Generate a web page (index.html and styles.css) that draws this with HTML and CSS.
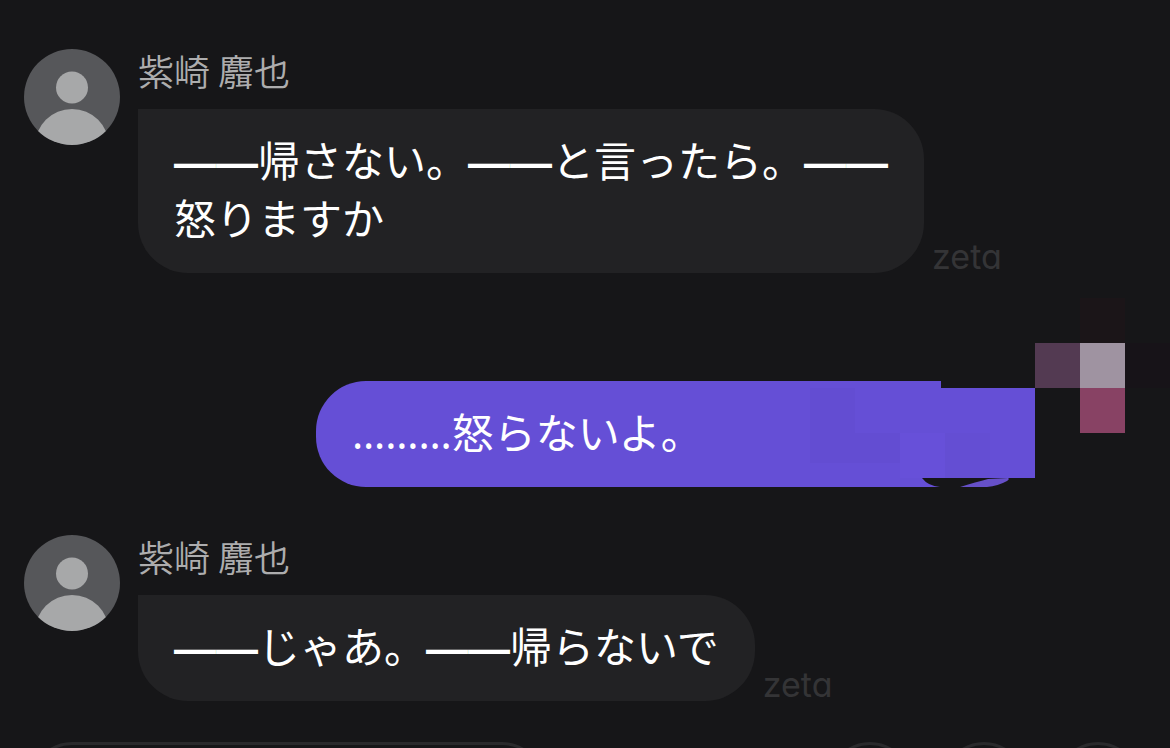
FILE: index.html
```html
<!DOCTYPE html>
<html lang="ja">
<head>
<meta charset="utf-8">
<title>zeta</title>
<link rel="stylesheet" href="styles.css">
</head>
<body>
<main class="chat">
  <article class="message">
    <svg class="avatar" viewBox="0 0 96 96" aria-hidden="true">
      <clipPath id="round-a"><circle cx="48" cy="48" r="48"/></clipPath>
      <g clip-path="url(#round-a)"><rect width="96" height="96" fill="#56575a"/><circle cx="48" cy="38.5" r="16" fill="#a7a8a9"/><circle cx="48" cy="97" r="37" fill="#a7a8a9"/></g>
    </svg>
    <div class="content">
      <h2 class="name">紫崎 麛也</h2>
      <div class="line">
        <p class="bubble"><span class="dash">——</span>帰さない。<span class="dash">——</span>と言ったら。<span class="dash">——</span><br>怒りますか</p>
        <span class="brand">zeta</span>
      </div>
    </div>
  </article>

  <article class="message own">
    <p class="bubble"><span class="dots">………</span>怒らないよ。</p>
    <svg class="mosaic" viewBox="0 0 360 190" aria-hidden="true">
      <path fill="#161618" d="M131 82h94v9h-94zM112 181h113v9h-95q-12-1-18-9z"/>
      <path fill="#634dd2" d="M0 91h45v75H0zM45 136h45v30H45z"/>
      <path fill="#6750d9" d="M90 136h45v45H90z"/>
      <path fill="#644ed3" d="M135 136h45v45h-45z"/>
      <path fill="#6650c8" d="M150 190q16-5 28-8l20-1q2 1-1 3-9 5-20 6z"/>
      <path fill="#1b1518" d="M270 1h45v45h-45z"/>
      <path fill="#533a52" d="M225 46h45v45h-45z"/>
      <path fill="#9f93a1" d="M270 46h45v45h-45z"/>
      <path fill="#171318" d="M315 46h45v45h-45z"/>
      <path fill="#884264" d="M270 91h45v45h-45z"/>
    </svg>
  </article>

  <article class="message">
    <svg class="avatar" viewBox="0 0 96 96" aria-hidden="true">
      <clipPath id="round-b"><circle cx="48" cy="48" r="48"/></clipPath>
      <g clip-path="url(#round-b)"><rect width="96" height="96" fill="#56575a"/><circle cx="48" cy="38.5" r="16" fill="#a7a8a9"/><circle cx="48" cy="97" r="37" fill="#a7a8a9"/></g>
    </svg>
    <div class="content">
      <h2 class="name">紫崎 麛也</h2>
      <div class="line">
        <p class="bubble"><span class="dash">——</span>じゃあ。<span class="dash">——</span>帰らないで</p>
        <span class="brand">zeta</span>
      </div>
    </div>
  </article>

  <footer class="actions">
    <button class="pill" type="button" aria-label="返信"></button>
    <button class="round" type="button" aria-label="操作 1"></button>
    <button class="round" type="button" aria-label="操作 2"></button>
    <button class="round" type="button" aria-label="操作 3"></button>
  </footer>
</main>
</body>
</html>
```

FILE: styles.css
```css
* {
  box-sizing: border-box;
}

body {
  margin: 0;
  background: #161618;
  color: #fff;
  font-family: "Noto Sans CJK JP", sans-serif;
}

.chat {
  display: flex;
  flex-direction: column;
  height: 100vh;
  overflow: hidden;
  padding-top: 49px;
}

.message {
  display: flex;
  flex-shrink: 0;
  gap: 18px;
  padding-left: 24px;
}

.avatar {
  flex-shrink: 0;
  width: 96px;
  height: 96px;
}

.name {
  margin: 0 0 18px;
  color: #adadae;
  font-size: 36px;
  font-weight: 350;
  line-height: 42px;
}

.line {
  display: flex;
  align-items: flex-end;
  gap: 8px;
}

.bubble {
  margin: 0;
  padding: 21px 36px 27px;
  border-radius: 0 50px 50px 50px;
  background: #222224;
  font-size: 42px;
  font-weight: 400;
  line-height: 58px;
  white-space: nowrap;
}

.dash {
  font-family: "Liberation Sans", sans-serif;
  font-weight: 700;
  line-height: 1;
}

.brand {
  color: #343436;
  font-family: Inter, sans-serif;
  font-size: 34px;
  font-feature-settings: "cv11";
  line-height: 32px;
}

.own {
  position: relative;
  justify-content: flex-end;
  margin: 108px 0 48px;
  padding: 0 135px 0 316px;
}

.own .bubble {
  flex: 1;
  border-radius: 50px 0 0 50px;
  background: #654fd6;
}

.dots {
  font-family: "Noto Sans", sans-serif;
  line-height: 1;
}

.mosaic {
  position: absolute;
  right: 0;
  bottom: 0;
  width: 360px;
  height: 190px;
}

.actions {
  display: flex;
  flex-shrink: 0;
  gap: 30px;
  margin-top: 41px;
  padding: 0 30px;
}

.pill,
.round {
  height: 84px;
  border: 3px solid #2a2a2c;
  border-radius: 42px;
  background: transparent;
}

.pill {
  width: 514px;
  margin-right: auto;
}

.round {
  width: 84px;
}
```
